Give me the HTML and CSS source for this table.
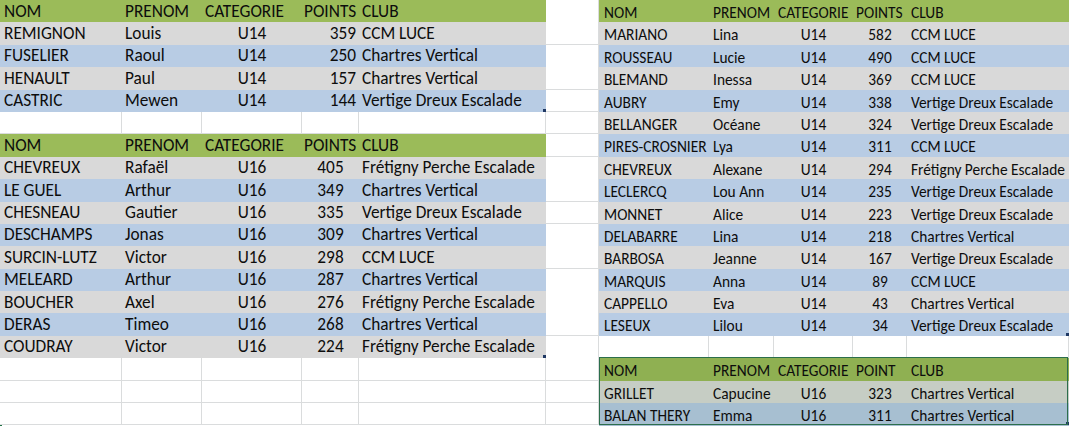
FILE: index.html
```html
<!DOCTYPE html>
<html lang="fr">
<head>
<meta charset="utf-8">
<title>Classement</title>
<link rel="stylesheet" href="styles.css">
</head>
<body>
<div class="screen">
  <section class="sheet sheet-left">
    <div class="row head"><div class="c">NOM</div><div class="c">PRENOM</div><div class="c">CATEGORIE</div><div class="c">POINTS</div><div class="c">CLUB</div><div class="c g"></div></div>
    <div class="row gray"><div class="c">REMIGNON</div><div class="c">Louis</div><div class="c ctr">U14</div><div class="c rgt">359</div><div class="c">CCM LUCE</div><div class="c g"></div></div>
    <div class="row blue"><div class="c">FUSELIER</div><div class="c">Raoul</div><div class="c ctr">U14</div><div class="c rgt">250</div><div class="c">Chartres Vertical</div><div class="c g"></div></div>
    <div class="row gray"><div class="c">HENAULT</div><div class="c">Paul</div><div class="c ctr">U14</div><div class="c rgt">157</div><div class="c">Chartres Vertical</div><div class="c g"></div></div>
    <div class="row blue last"><div class="c">CASTRIC</div><div class="c">Mewen</div><div class="c ctr">U14</div><div class="c rgt">144</div><div class="c">Vertige Dreux Escalade</div><div class="c g"></div></div>
    <div class="row empty"><div class="c g"></div><div class="c g"></div><div class="c g"></div><div class="c g"></div><div class="c g"></div><div class="c g"></div></div>
    <div class="row head"><div class="c">NOM</div><div class="c">PRENOM</div><div class="c">CATEGORIE</div><div class="c">POINTS</div><div class="c">CLUB</div><div class="c g"></div></div>
    <div class="row gray"><div class="c">CHEVREUX</div><div class="c">Rafaël</div><div class="c ctr">U16</div><div class="c ctr">405</div><div class="c">Frétigny Perche Escalade</div><div class="c g"></div></div>
    <div class="row blue"><div class="c">LE GUEL</div><div class="c">Arthur</div><div class="c ctr">U16</div><div class="c ctr">349</div><div class="c">Chartres Vertical</div><div class="c g"></div></div>
    <div class="row gray"><div class="c">CHESNEAU</div><div class="c">Gautier</div><div class="c ctr">U16</div><div class="c ctr">335</div><div class="c">Vertige Dreux Escalade</div><div class="c g"></div></div>
    <div class="row blue"><div class="c">DESCHAMPS</div><div class="c">Jonas</div><div class="c ctr">U16</div><div class="c ctr">309</div><div class="c">Chartres Vertical</div><div class="c g"></div></div>
    <div class="row gray"><div class="c">SURCIN-LUTZ</div><div class="c">Victor</div><div class="c ctr">U16</div><div class="c ctr">298</div><div class="c">CCM LUCE</div><div class="c g"></div></div>
    <div class="row blue"><div class="c">MELEARD</div><div class="c">Arthur</div><div class="c ctr">U16</div><div class="c ctr">287</div><div class="c">Chartres Vertical</div><div class="c g"></div></div>
    <div class="row gray"><div class="c">BOUCHER</div><div class="c">Axel</div><div class="c ctr">U16</div><div class="c ctr">276</div><div class="c">Frétigny Perche Escalade</div><div class="c g"></div></div>
    <div class="row blue"><div class="c">DERAS</div><div class="c">Timeo</div><div class="c ctr">U16</div><div class="c ctr">268</div><div class="c">Chartres Vertical</div><div class="c g"></div></div>
    <div class="row gray last"><div class="c">COUDRAY</div><div class="c">Victor</div><div class="c ctr">U16</div><div class="c ctr">224</div><div class="c">Frétigny Perche Escalade</div><div class="c g"></div></div>
    <div class="selection">
      <div class="row empty"><div class="c g"></div><div class="c g"></div><div class="c g"></div><div class="c g"></div><div class="c g"></div><div class="c g"></div></div>
      <div class="row empty"><div class="c g"></div><div class="c g"></div><div class="c g"></div><div class="c g"></div><div class="c g"></div><div class="c g"></div></div>
      <div class="row empty"><div class="c g"></div><div class="c g"></div><div class="c g"></div><div class="c g"></div><div class="c g"></div><div class="c g"></div></div>
    </div>
  </section>

  <section class="sheet sheet-right">
    <div class="row head"><div class="c">NOM</div><div class="c">PRENOM</div><div class="c">CATEGORIE</div><div class="c">POINTS</div><div class="c">CLUB</div></div>
    <div class="row gray"><div class="c">MARIANO</div><div class="c">Lina</div><div class="c ctr">U14</div><div class="c ctr">582</div><div class="c">CCM LUCE</div></div>
    <div class="row blue"><div class="c">ROUSSEAU</div><div class="c">Lucie</div><div class="c ctr">U14</div><div class="c ctr">490</div><div class="c">CCM LUCE</div></div>
    <div class="row gray"><div class="c">BLEMAND</div><div class="c">Inessa</div><div class="c ctr">U14</div><div class="c ctr">369</div><div class="c">CCM LUCE</div></div>
    <div class="row blue"><div class="c">AUBRY</div><div class="c">Emy</div><div class="c ctr">U14</div><div class="c ctr">338</div><div class="c">Vertige Dreux Escalade</div></div>
    <div class="row gray"><div class="c">BELLANGER</div><div class="c">Océane</div><div class="c ctr">U14</div><div class="c ctr">324</div><div class="c">Vertige Dreux Escalade</div></div>
    <div class="row blue"><div class="c">PIRES-CROSNIER</div><div class="c">Lya</div><div class="c ctr">U14</div><div class="c ctr">311</div><div class="c">CCM LUCE</div></div>
    <div class="row gray"><div class="c">CHEVREUX</div><div class="c">Alexane</div><div class="c ctr">U14</div><div class="c ctr">294</div><div class="c">Frétigny Perche Escalade</div></div>
    <div class="row blue"><div class="c">LECLERCQ</div><div class="c">Lou Ann</div><div class="c ctr">U14</div><div class="c ctr">235</div><div class="c">Vertige Dreux Escalade</div></div>
    <div class="row gray"><div class="c">MONNET</div><div class="c">Alice</div><div class="c ctr">U14</div><div class="c ctr">223</div><div class="c">Vertige Dreux Escalade</div></div>
    <div class="row blue"><div class="c">DELABARRE</div><div class="c">Lina</div><div class="c ctr">U14</div><div class="c ctr">218</div><div class="c">Chartres Vertical</div></div>
    <div class="row gray"><div class="c">BARBOSA</div><div class="c">Jeanne</div><div class="c ctr">U14</div><div class="c ctr">167</div><div class="c">Vertige Dreux Escalade</div></div>
    <div class="row blue"><div class="c">MARQUIS</div><div class="c">Anna</div><div class="c ctr">U14</div><div class="c ctr">89</div><div class="c">CCM LUCE</div></div>
    <div class="row gray"><div class="c">CAPPELLO</div><div class="c">Eva</div><div class="c ctr">U14</div><div class="c ctr">43</div><div class="c">Chartres Vertical</div></div>
    <div class="row blue last"><div class="c">LESEUX</div><div class="c">Lilou</div><div class="c ctr">U14</div><div class="c ctr">34</div><div class="c">Vertige Dreux Escalade</div></div>
    <div class="row empty"><div class="c g"></div><div class="c g"></div><div class="c g"></div><div class="c g"></div><div class="c g"></div></div>
    <div class="picked">
      <div class="row head sel"><div class="c">NOM</div><div class="c">PRENOM</div><div class="c">CATEGORIE</div><div class="c">POINT</div><div class="c">CLUB</div></div>
      <div class="row gray sel"><div class="c">GRILLET</div><div class="c">Capucine</div><div class="c ctr">U16</div><div class="c ctr">323</div><div class="c">Chartres Vertical</div></div>
      <div class="row blue sel last"><div class="c">BALAN THERY</div><div class="c">Emma</div><div class="c ctr">U16</div><div class="c ctr">311</div><div class="c">Chartres Vertical</div></div>
    </div>
  </section>
</div>
</body>
</html>
```

FILE: styles.css
```css
html, body {
  margin: 0;
  padding: 0;
  background: #ffffff;
}

.screen {
  display: flex;
  width: 1069px;
  height: 426px;
  overflow: hidden;
  font-family: Carlito, Lato, "Open Sans", sans-serif;
  color: #0d0d0d;
}

.sheet {
  display: flex;
  flex-direction: column;
}

.sheet-left {
  width: 599px;
  font-size: 17.3px;
}

.sheet-right {
  width: 470px;
  font-size: 15.4px;
}

.row {
  display: grid;
  height: 22.4px;
  position: relative;
}

.sheet-left .row {
  grid-template-columns: 122px 80px 100px 57px 187px 1fr;
}

.sheet-right .row {
  grid-template-columns: 110px 65px 79px 54px 1fr;
}

.c {
  box-sizing: border-box;
  white-space: nowrap;
  line-height: 22.4px;
  padding-left: 3px;
  padding-top: 0.5px;
  overflow: visible;
}

.sheet-left .c:first-child { padding-left: 4px; }
.sheet-right .c { padding-left: 4px; padding-top: 2px; }
.sheet-right .c:first-child { padding-left: 5px; }
.sheet-left .row.head .c:nth-child(4) { padding-left: 2px; }
.sheet-right .row.head .c:nth-child(4) { padding-left: 3px; }

.c.ctr { text-align: center; padding-left: 0; }
.sheet-right .c.ctr { padding-left: 0; }
.c.rgt { text-align: right; padding-left: 0; padding-right: 3px; }

.head .c { background: #9bbb59; }
.gray .c { background: #d9d9d9; }
.blue .c { background: #b8cce4; }

.c.g {
  background: #ffffff;
  border-right: 1px solid #dadcdd;
  border-bottom: 1px solid #dadcdd;
}

.row.last::after {
  content: "";
  position: absolute;
  width: 3px;
  height: 3px;
  background: #1f3864;
  bottom: 0;
}

.sheet-left .row.last::after { left: 543px; }
.sheet-right .row.last::after { right: 0; }

.selection {
  position: relative;
}

.selection::before {
  content: "";
  position: absolute;
  left: 0;
  top: 0;
  bottom: -4px;
  width: 2px;
  background: #217346;
}

.picked {
  position: relative;
}

.picked::after {
  content: "";
  position: absolute;
  left: 0;
  top: -1px;
  right: 1px;
  bottom: 0;
  border: 1.5px solid #2c6e4c;
  pointer-events: none;
}

.head.sel .c { background: #8fb052; }
.gray.sel .c { background: #c6cdc4; }
.blue.sel .c { background: #a7bfd1; }
```
